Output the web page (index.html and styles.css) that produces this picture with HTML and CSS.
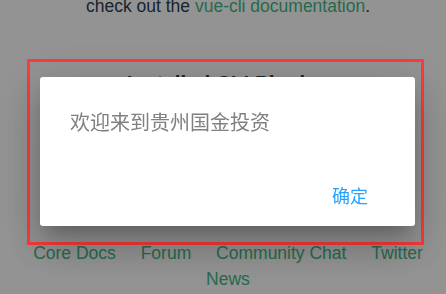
FILE: index.html
```html
<!DOCTYPE html>
<html lang="zh-CN">
<head>
<meta charset="utf-8">
<title>HelloWorld</title>
<link rel="stylesheet" href="styles.css">
</head>
<body>
<div class="page">
  <p class="intro">check out the <a href="#">vue-cli documentation</a>.</p>
  <h3 class="plugins-title">Installed CLI Plugins</h3>
  <ul class="plugins">
    <li><a href="#">babel</a></li>
    <li><a href="#">eslint</a></li>
  </ul>
  <h3 class="essential-title">Essential Links</h3>
  <ul class="links">
    <li><a href="#">Core Docs</a></li>
    <li><a href="#">Forum</a></li>
    <li><a href="#">Community Chat</a></li>
    <li><a href="#">Twitter</a></li>
    <li><a href="#">News</a></li>
  </ul>
</div>
<div class="overlay"></div>
<div class="frame">
  <div class="dialog">
    <div class="message">欢迎来到贵州国金投资</div>
    <div class="actions"><button class="confirm">确定</button></div>
  </div>
</div>
</body>
</html>
```
FILE: styles.css
```css
html, body {
  margin: 0;
  padding: 0;
  background: #ffffff;
  overflow: hidden;
}
body {
  font-family: "Liberation Sans", Arial, "Noto Sans CJK SC", sans-serif;
  color: #2c3e50;
  width: 446px;
  height: 294px;
}
.page {
  margin-top: -4px;
  padding-left: 10px;
  text-align: center;
  font-size: 17.5px;
}
.page a {
  color: #42b983;
  text-decoration: none;
}
.intro {
  margin: 0;
  line-height: 20px;
}
.plugins-title,
.essential-title {
  font-size: 20.6px;
  font-weight: bold;
  line-height: 24px;
  margin: 0;
}
.plugins-title {
  margin-top: 55px;
}
.essential-title {
  margin-top: 40px;
}
ul {
  list-style: none;
  padding: 0;
  margin: 0;
}
.plugins {
  margin-top: 16px;
  line-height: 20px;
}
.plugins li,
.links li {
  display: inline-block;
  margin: 0 10px;
}
.links {
  margin-top: 45px;
  line-height: 26px;
}
.overlay {
  position: fixed;
  inset: 0;
  background: rgba(0, 0, 0, 0.424);
}
.frame {
  position: fixed;
  left: 27px;
  top: 59px;
  width: 375px;
  height: 149px;
  border: 3px solid #ff3b3b;
  padding: 15px 6px 16px 10px;
  box-sizing: content-box;
  display: flex;
}
.dialog {
  flex: 1;
  background: #ffffff;
  border-radius: 3px;
  box-shadow: 0 11px 15px -7px rgba(0, 0, 0, 0.2), 0 24px 38px 3px rgba(0, 0, 0, 0.14), 0 9px 46px 8px rgba(0, 0, 0, 0.12);
  display: flex;
  flex-direction: column;
  font-family: "Noto Sans CJK SC", "Liberation Sans", sans-serif;
}
.message {
  padding: 33px 30px 0;
  font-size: 20px;
  line-height: 24px;
  color: #808080;
}
.actions {
  margin-top: auto;
  display: flex;
  justify-content: flex-end;
  padding: 0 38px 16px 0;
}
.confirm {
  border: 0;
  background: transparent;
  padding: 4px 9px;
  font-family: "Noto Sans CJK SC", sans-serif;
  font-size: 18px;
  line-height: 22px;
  color: #26a2ff;
  cursor: pointer;
}
```
